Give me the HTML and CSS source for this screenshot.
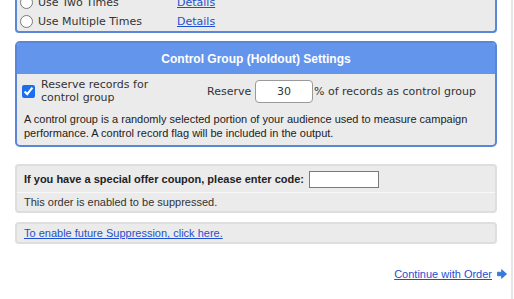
FILE: index.html
```html
<!DOCTYPE html>
<html>
<head>
<meta charset="utf-8">
<link rel="stylesheet" href="styles.css">
</head>
<body>
<div class="page">
  <div class="optbox">
    <div class="optrow">
      <input type="radio" class="radio" name="use">
      <span class="optlabel">Use Two Times</span>
      <a href="#" class="link">Details</a>
    </div>
    <div class="optrow">
      <input type="radio" class="radio" name="use">
      <span class="optlabel">Use Multiple Times</span>
      <a href="#" class="link">Details</a>
    </div>
  </div>

  <div class="cg">
    <div class="cg-head">Control Group (Holdout) Settings</div>
    <div class="cg-row">
      <input type="checkbox" class="cg-check" checked>
      <span class="cg-label">Reserve records for control group</span>
      <span class="cg-reserve">Reserve</span>
      <input type="text" class="cg-input" value="30">
      <span class="cg-suffix">% of records as control group</span>
    </div>
    <p class="cg-desc">A control group is a randomly selected portion of your audience used to measure campaign performance. A control record flag will be included in the output.</p>
  </div>

  <div class="graybox">
    <div class="coupon-row">
      <span class="coupon-label">If you have a special offer coupon, please enter code:</span>
      <input type="text" class="coupon-input">
    </div>
    <div class="note-row">This order is enabled to be suppressed.</div>
  </div>

  <div class="graybox supp">
    <a href="#" class="link">To enable future Suppression, click here.</a>
  </div>

  <div class="continue">
    <a href="#" class="link cont-link">Continue with Order</a>
    <svg class="arrow" width="10" height="10" viewBox="0 0 10 10">
      <path d="M0.5 3.2 H4.6 V0.6 L9.6 5 L4.6 9.4 V6.8 H0.5 Z" fill="#2f7de1" stroke="#1d5fc0" stroke-width="0.6"/>
    </svg>
  </div>
</div>
</body>
</html>
```
FILE: styles.css
```css
html, body {
  margin: 0;
  padding: 0;
  background: #ffffff;
}
body {
  font-family: "Liberation Sans", Arial, sans-serif;
  font-size: 11px;
  color: #222;
  overflow: hidden;
}
.page {
  width: 482px;
  padding: 0 14px 40px 15px;
  border-right: 2px solid #e6e6e6;
  min-height: 320px;
}
.link {
  color: #1f4fcf;
  text-decoration: underline;
}
.optbox {
  margin-top: -7px;
  background: #ebebeb;
  border: 2px solid #5b87d9;
  border-top: none;
  border-radius: 0 0 4px 4px;
  padding: 0 0 0 3px;
}
.optrow {
  display: flex;
  align-items: center;
  height: 19px;
  font-family: "DejaVu Sans", Verdana, sans-serif;
  font-size: 11px;
  color: #333;
}
.radio {
  flex: none;
  margin: 0;
  width: 13px;
  height: 13px;
}
.optlabel {
  flex: none;
  margin-left: 5px;
  width: 139px;
}
.optrow .link {
  font-family: "DejaVu Sans", Verdana, sans-serif;
}
.cg {
  margin-top: 8px;
  border: 2px solid #5a86d8;
  border-radius: 5px;
  background: #ebebeb;
  overflow: hidden;
}
.cg-head {
  height: 31px;
  background: #6495ed;
  color: #fff;
  font-weight: bold;
  font-size: 12px;
  display: flex;
  align-items: center;
  justify-content: center;
}
.cg-row {
  display: flex;
  align-items: center;
  padding: 4px 0 0 5px;
  font-family: "DejaVu Sans", Verdana, sans-serif;
  font-size: 11px;
  color: #333;
}
.cg-row > * {
  flex: none;
}
.cg-check {
  margin: 0;
  width: 13px;
  height: 13px;
  accent-color: #1a6ff0;
}
.cg-label {
  margin-left: 6px;
  margin-right: 46px;
  width: 120px;
  line-height: 13px;
}
.cg-reserve {
  width: 48px;
}
.cg-input {
  box-sizing: border-box;
  width: 58px;
  height: 23px;
  margin: 0;
  padding: 0;
  border: 1px solid #9a9a9a;
  border-radius: 4px;
  background: #fff;
  text-align: center;
  font-family: "DejaVu Sans", Verdana, sans-serif;
  font-size: 11px;
  color: #333;
}
.cg-suffix {
  margin-left: 1px;
}
.cg-desc {
  margin: 8px 0 0;
  padding: 0 6px 5px 7px;
  line-height: 14px;
  color: #222;
}
.graybox {
  margin-top: 17px;
  background: #ebebeb;
  border: 2px solid #dedede;
  border-radius: 4px;
}
.coupon-row {
  display: flex;
  align-items: center;
  height: 26px;
  padding-left: 7px;
  border-bottom: 1px solid #f8f8f8;
}
.coupon-label {
  font-weight: bold;
  font-size: 11px;
  color: #222;
}
.coupon-input {
  box-sizing: border-box;
  flex: none;
  margin: 0 0 0 5px;
  width: 70px;
  height: 17px;
  border: 1px solid #7a7a7a;
  background: #fff;
  padding: 0;
}
.note-row {
  height: 18px;
  display: flex;
  align-items: center;
  padding-left: 7px;
  color: #333;
}
.supp {
  margin-top: 9px;
  height: 18px;
  display: flex;
  align-items: center;
  padding-left: 7px;
}
.continue {
  margin-top: 24px;
  display: flex;
  justify-content: flex-end;
  align-items: center;
}
.cont-link {
  font-size: 11px;
}
.arrow {
  margin-left: 5px;
  margin-right: -10px;
}
```
